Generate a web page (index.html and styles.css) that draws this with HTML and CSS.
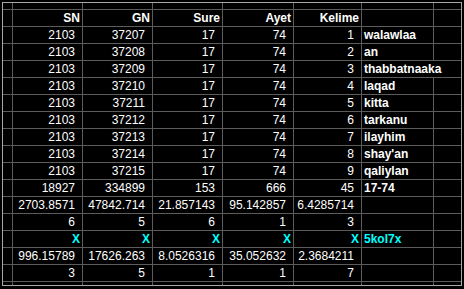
FILE: index.html
```html
<!DOCTYPE html>
<html>
<head>
<meta charset="utf-8">
<link rel="stylesheet" href="styles.css">
</head>
<body>
<div class="frame">
  <div class="grid">
    <div class="c"></div><div class="c"></div><div class="c"></div><div class="c"></div><div class="c"></div><div class="c"></div><div class="c"></div><div class="c"></div>

    <div class="c"></div><div class="c h">SN</div><div class="c h">GN</div><div class="c h">Sure</div><div class="c h">Ayet</div><div class="c h">Kelime</div><div class="c"></div><div class="c"></div>

    <div class="c"></div><div class="c n">2103</div><div class="c n">37207</div><div class="c n">17</div><div class="c n">74</div><div class="c n">1</div><div class="c t">walawlaa</div><div class="c"></div>
    <div class="c"></div><div class="c n">2103</div><div class="c n">37208</div><div class="c n">17</div><div class="c n">74</div><div class="c n">2</div><div class="c t">an</div><div class="c"></div>
    <div class="c"></div><div class="c n">2103</div><div class="c n">37209</div><div class="c n">17</div><div class="c n">74</div><div class="c n">3</div><div class="c t span2">thabbatnaaka</div>
    <div class="c"></div><div class="c n">2103</div><div class="c n">37210</div><div class="c n">17</div><div class="c n">74</div><div class="c n">4</div><div class="c t">laqad</div><div class="c"></div>
    <div class="c"></div><div class="c n">2103</div><div class="c n">37211</div><div class="c n">17</div><div class="c n">74</div><div class="c n">5</div><div class="c t">kitta</div><div class="c"></div>
    <div class="c"></div><div class="c n">2103</div><div class="c n">37212</div><div class="c n">17</div><div class="c n">74</div><div class="c n">6</div><div class="c t">tarkanu</div><div class="c"></div>
    <div class="c"></div><div class="c n">2103</div><div class="c n">37213</div><div class="c n">17</div><div class="c n">74</div><div class="c n">7</div><div class="c t">ilayhim</div><div class="c"></div>
    <div class="c"></div><div class="c n">2103</div><div class="c n">37214</div><div class="c n">17</div><div class="c n">74</div><div class="c n">8</div><div class="c t">shay'an</div><div class="c"></div>
    <div class="c"></div><div class="c n">2103</div><div class="c n">37215</div><div class="c n">17</div><div class="c n">74</div><div class="c n">9</div><div class="c t">qaliylan</div><div class="c"></div>

    <div class="c"></div><div class="c n">18927</div><div class="c n">334899</div><div class="c n">153</div><div class="c n">666</div><div class="c n">45</div><div class="c t">17-74</div><div class="c"></div>
    <div class="c"></div><div class="c n">2703.8571</div><div class="c n">47842.714</div><div class="c n">21.857143</div><div class="c n">95.142857</div><div class="c n">6.4285714</div><div class="c"></div><div class="c"></div>
    <div class="c"></div><div class="c n">6</div><div class="c n">5</div><div class="c n">6</div><div class="c n">1</div><div class="c n">3</div><div class="c"></div><div class="c"></div>
    <div class="c"></div><div class="c x">X</div><div class="c x">X</div><div class="c x">X</div><div class="c x">X</div><div class="c x">X</div><div class="c t cy">5kol7x</div><div class="c"></div>
    <div class="c"></div><div class="c n">996.15789</div><div class="c n">17626.263</div><div class="c n">8.0526316</div><div class="c n">35.052632</div><div class="c n">2.3684211</div><div class="c"></div><div class="c"></div>
    <div class="c"></div><div class="c n">3</div><div class="c n">5</div><div class="c n">1</div><div class="c n">1</div><div class="c n">7</div><div class="c"></div><div class="c"></div>

    <div class="c"></div><div class="c"></div><div class="c"></div><div class="c"></div><div class="c"></div><div class="c"></div><div class="c"></div><div class="c"></div>
  </div>
</div>
</body>
</html>
```

FILE: styles.css
```css
html, body {
  margin: 0;
  padding: 0;
  background: #000;
  width: 464px;
  height: 289px;
  overflow: hidden;
}

.frame {
  margin: 2px;
  width: 458px;
  height: 282px;
  border: 1px solid #a8a8a8;
  overflow: hidden;
  background: #000;
}

.grid {
  display: grid;
  grid-template-columns: 9px 69px 69px 69px 70px 67px 71px 1fr;
  grid-template-rows: 6px repeat(16, 16px) 1fr;
  gap: 1px;
  background: #5c5c5c;
  height: 100%;
  font-family: "Liberation Sans", Arial, sans-serif;
  font-size: 12px;
  color: #fff;
}

.c {
  background: #000;
  line-height: 16px;
  white-space: nowrap;
  overflow: hidden;
}

.h {
  font-weight: bold;
  text-align: right;
  padding-right: 2px;
}

.n {
  text-align: right;
  padding-right: 7px;
}

.x {
  text-align: right;
  padding-right: 2px;
  font-weight: bold;
  color: #00ffff;
}

.t {
  font-weight: bold;
  text-align: left;
  padding-left: 2px;
}

.span2 {
  grid-column: span 2;
}

.cy {
  color: #00ffff;
}
```
